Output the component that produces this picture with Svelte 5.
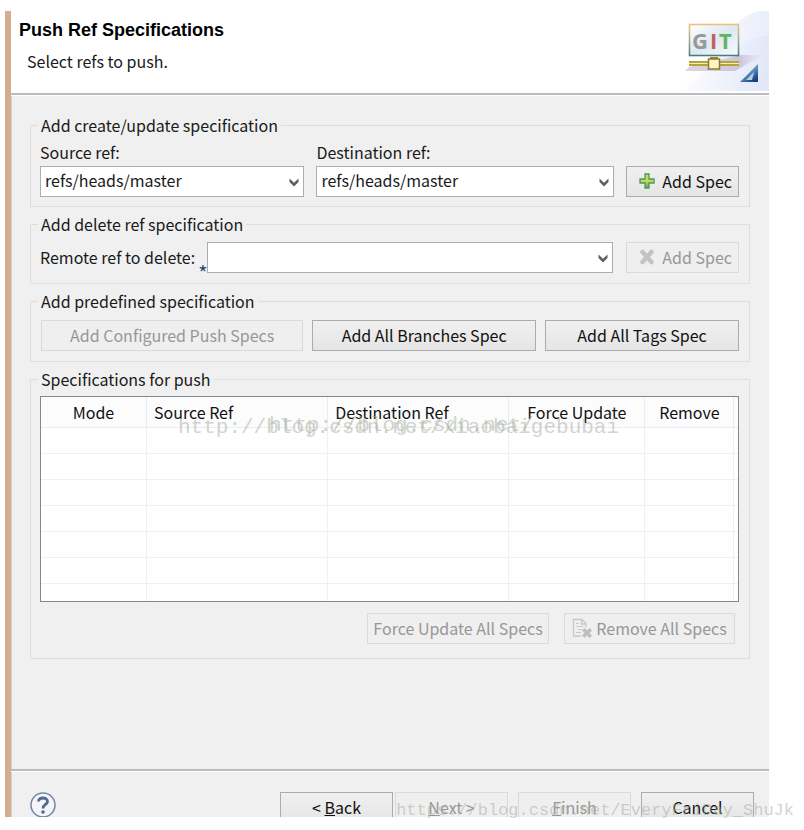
<script lang="ts">
  let sourceRef = $state('refs/heads/master');
  let destinationRef = $state('refs/heads/master');
  let deleteRef = $state('');

  const columns = [
    { label: 'Mode', cls: 'mode' },
    { label: 'Source Ref', cls: 'source' },
    { label: 'Destination Ref', cls: 'destination' },
    { label: 'Force Update', cls: 'force' },
    { label: 'Remove', cls: 'remove' },
    { label: '', cls: 'rest' }
  ];

  const emptyRows = [0, 1, 2, 3, 4, 5, 6];
</script>

{#snippet chevron()}
  <svg class="chevron" width="10" height="9" viewBox="0 0 10 9" aria-hidden="true">
    <path d="M0.5 0.5 5 4.8 9.5 0.5V4L5 8.4 0.5 4Z" fill="#606060" />
  </svg>
{/snippet}

<div class="page">
  <div class="dialog">
    <header>
      <div class="titles">
        <h1>Push Ref Specifications</h1>
        <p>Select refs to push.</p>
      </div>
      <svg class="banner" width="90" height="80" viewBox="0 0 90 80" role="img" aria-label="Git">
        <defs>
          <linearGradient id="sky" x1="0" y1="0.4" x2="1" y2="0.5">
            <stop offset="0" stop-color="#fff" />
            <stop offset="1" stop-color="#dfe6f8" />
          </linearGradient>
          <linearGradient id="frame" x1="0" y1="0" x2="0" y2="1">
            <stop offset="0" stop-color="#efc07c" />
            <stop offset="0.5" stop-color="#a5aa98" />
            <stop offset="1" stop-color="#4c7c80" />
          </linearGradient>
          <linearGradient id="board" x1="0" y1="0" x2="1" y2="1">
            <stop offset="0" stop-color="#fff" />
            <stop offset="0.5" stop-color="#dce9f3" />
            <stop offset="1" stop-color="#f8fbfd" />
          </linearGradient>
          <linearGradient id="corner" x1="0" y1="0" x2="0.7" y2="1">
            <stop offset="0.2" stop-color="#8fb8da" />
            <stop offset="0.6" stop-color="#5687bb" />
            <stop offset="1" stop-color="#183d80" />
          </linearGradient>
          <linearGradient id="shade" x1="0" y1="0" x2="1" y2="0">
            <stop offset="0" stop-color="#c9b8c8" stop-opacity="0.6" />
            <stop offset="0.7" stop-color="#b9aac8" stop-opacity="0.6" />
            <stop offset="1" stop-color="#c9c4e0" stop-opacity="0" />
          </linearGradient>
        </defs>
        <path d="M90 0H80C62 4 42 24 32 46C26 60 12 72 0 80H90Z" fill="url(#sky)" opacity="0.7" />
        <path d="M90 24C72 26 52 36 40 50C30 62 20 74 0 80H90Z" fill="url(#sky)" opacity="0.8" />
        <path d="M10 56 62 44H84L56 60H6Z" fill="url(#shade)" />
        <rect x="10.500" y="13.500" width="49" height="31" fill="url(#board)" stroke="url(#frame)" stroke-width="1.600" />
        <text x="13" y="38" fill="#999">G</text>
        <text x="31" y="38" fill="#ca5c5c">I</text>
        <text x="40" y="38" fill="#63b363">T</text>
        <path d="M31 46h8v3h-8z" fill="#958542" />
        <rect x="10" y="50" width="50" height="5" fill="#b2a63a" />
        <rect x="10" y="52" width="50" height="1" fill="#f4edb4" />
        <rect x="29.500" y="48" width="11" height="10" fill="#fff2c8" stroke="#8e7a2d" stroke-width="1.500" />
        <path d="M61 71 79 53V71Z" fill="url(#corner)" />
        <path d="M67 69 75 61 73 69Z" fill="#e4eef7" opacity="0.75" />
      </svg>
    </header>

    <main>
      <fieldset class="create">
        <legend>Add create/update specification</legend>
        <div class="field">
          <label for="source-ref">Source ref:</label>
          <div class="combo">
            <select id="source-ref" bind:value={sourceRef}>
              <option>refs/heads/master</option>
            </select>
            {@render chevron()}
          </div>
        </div>
        <div class="field">
          <label for="destination-ref">Destination ref:</label>
          <div class="combo">
            <select id="destination-ref" bind:value={destinationRef}>
              <option>refs/heads/master</option>
            </select>
            {@render chevron()}
          </div>
        </div>
        <button class="spec">
          <svg width="16" height="16" viewBox="0 0 16 16" aria-hidden="true">
            <defs>
              <linearGradient id="plus" x1="0" y1="0" x2="0" y2="1">
                <stop offset="0" stop-color="#c5dc68" />
                <stop offset="0.5" stop-color="#c6d85c" />
                <stop offset="1" stop-color="#5fa848" />
              </linearGradient>
            </defs>
            <path d="M6 1h4v5h5v4h-5v5H6v-5H1V6h5Z" fill="url(#plus)" stroke="#4d9861" stroke-width="1.300" />
          </svg>
          Add Spec
        </button>
      </fieldset>

      <fieldset class="delete">
        <legend>Add delete ref specification</legend>
        <label for="delete-ref">Remote ref to delete:</label>
        <span class="required">*</span>
        <div class="combo">
          <select id="delete-ref" bind:value={deleteRef}>
            <option value=""></option>
          </select>
          {@render chevron()}
        </div>
        <button class="spec" disabled>
          <svg width="16" height="16" viewBox="0 0 16 16" aria-hidden="true">
            <path d="M3.500 3 12.500 13M12.500 3 3.500 13" stroke="#c3c3c3" stroke-width="4.500" stroke-linecap="round" />
          </svg>
          Add Spec
        </button>
      </fieldset>

      <fieldset class="predefined">
        <legend>Add predefined specification</legend>
        <button class="configured" disabled>Add Configured Push Specs</button>
        <button class="branches">Add All Branches Spec</button>
        <button class="tags">Add All Tags Spec</button>
      </fieldset>

      <fieldset class="push">
        <legend>Specifications for push</legend>
        <div class="viewer">
          <table aria-label="Specifications for push">
            <thead>
              <tr>
                {#each columns as column}
                  <th class={column.cls}>{column.label}</th>
                {/each}
              </tr>
            </thead>
            <tbody>
              {#each emptyRows as row (row)}
                <tr>
                  {#each columns as column}
                    <td></td>
                  {/each}
                </tr>
              {/each}
            </tbody>
          </table>
          <span class="watermark long">http://blog.csdn.net/xiaobaigebubai</span>
          <span class="watermark short">http://blog.csdn.net/</span>
        </div>
        <div class="actions">
          <button class="force-all" disabled>Force Update All Specs</button>
          <button class="remove-all" disabled>
            <svg width="20" height="20" viewBox="0 0 20 20" aria-hidden="true">
              <path d="M9 18H1.500V1.500H10L14 5.500V9M9.500 1.500V6H14" fill="none" stroke="#c8c8c8" stroke-width="1.300" />
              <path d="M4 5.500h3M4 8.500h7M6 11.500h4M4 14.500h5" stroke="#c8c8c8" />
              <path d="M12.500 12.500 17.500 17.500M17.500 12.500 12.500 17.500" stroke="#bebebe" stroke-width="3.500" stroke-linecap="square" />
            </svg>
            Remove All Specs
          </button>
        </div>
      </fieldset>
    </main>

    <footer>
      <button class="help" aria-label="Help">
        <svg width="26" height="26" viewBox="0 0 26 26" aria-hidden="true">
          <circle cx="13" cy="13" r="12" fill="#f3f5f8" stroke="#7186a3" stroke-width="1.500" />
          <path d="M8.500 9.500C8.800 4.800 17.500 4.800 17.500 9.500C17.500 12.500 13 12.500 13 16.500" fill="none" stroke="#506a91" stroke-width="2.800" />
          <circle cx="13" cy="20" r="1.800" fill="#506a91" />
        </svg>
      </button>
      <div class="wizard">
        <div class="steps">
          <button>&lt; <u>B</u>ack</button>
          <button disabled><u>N</u>ext &gt;</button>
        </div>
        <button disabled><u>F</u>inish</button>
        <button>Cancel</button>
      </div>
    </footer>
  </div>
  <span class="watermark corner">https://blog.csdn.net/EveryFriDay_ShuJk</span>
</div>

<style>
  :global(body) {
    background: #fff;
  }

  .page {
    position: relative;
    display: flex;
    box-sizing: border-box;
    min-height: 100vh;
    padding: 11px 35px 13px 5px;
    overflow: hidden;
    font-family: 'Noto Sans CJK SC', 'Noto Sans', sans-serif;
    font-size: 16px;
    line-height: 22px;
    color: #1a1a1a;
  }

  .dialog {
    flex: 1;
    min-width: 0;
    display: flex;
    flex-direction: column;
    background: #f0f0f0;
    border-left: 6px solid #d3ae92;
    box-shadow: inset 1px 0 #dcd0c8;
  }

  header {
    display: flex;
    justify-content: space-between;
    height: 82px;
    background: #fff;
    border-bottom: 2px solid #bcbcbc;
  }

  .titles {
    padding: 8px 8px 0;
  }

  h1 {
    margin: 0;
    font-family: 'Liberation Sans', Arial, sans-serif;
    font-size: 18px;
    line-height: 22px;
    font-weight: bold;
    color: #000;
  }

  p {
    margin: 9px 0 0 8px;
  }

  .banner text {
    font-family: 'Open Sans', sans-serif;
    font-size: 22px;
    font-weight: bold;
  }

  main {
    flex: 1;
    display: flex;
    flex-direction: column;
    gap: 6px;
    padding: 18px 19px 0;
    border-top: 1px solid #fff;
  }

  fieldset {
    display: flex;
    min-width: 0;
    margin: 0;
    padding: 6px 10px 10px 9px;
    border: 1px solid #dedede;
  }

  legend {
    margin-left: -2px;
    padding: 0 3px;
  }

  .create {
    align-items: flex-end;
    gap: 12px;
    padding-top: 5px;
    padding-bottom: 9px;
  }

  .field {
    flex: 264;
    min-width: 0;
  }

  .field + .field {
    flex-grow: 297;
  }

  .field label {
    display: block;
    margin-bottom: 3px;
  }

  .combo {
    position: relative;
  }

  select {
    display: block;
    box-sizing: border-box;
    width: 100%;
    height: 31px;
    padding: 0 24px 4px 4px;
    appearance: none;
    background: #fff;
    border: 1px solid #abadb3;
    border-radius: 0;
    font: inherit;
    color: inherit;
  }

  .chevron {
    position: absolute;
    top: 12px;
    right: 5px;
    pointer-events: none;
  }

  .delete {
    align-items: center;
    padding-top: 7px;
  }

  .delete label {
    padding-bottom: 2px;
  }

  .delete .combo {
    flex: 1;
    margin-right: 13px;
  }

  .required {
    align-self: flex-end;
    width: 9px;
    margin-left: 3px;
    font-size: 20px;
    line-height: 0;
    color: #1f4e79;
  }

  button {
    display: flex;
    align-items: center;
    justify-content: center;
    box-sizing: border-box;
    height: 31px;
    padding: 0 0 2px;
    background: linear-gradient(#f0f0f0, #e5e5e5);
    border: 1px solid #acacac;
    border-radius: 0;
    font: inherit;
    color: #111;
    white-space: nowrap;
  }

  button:disabled {
    background: #efefef;
    border-color: #dadada;
    color: #979797;
  }

  .spec {
    width: 113px;
    justify-content: flex-end;
    gap: 7px;
    padding-right: 6px;
    flex-shrink: 0;
  }

  .predefined {
    gap: 9px;
    padding-top: 8px;
    padding-left: 10px;
  }

  .predefined legend {
    margin-left: -3px;
  }

  .configured {
    flex: 263;
  }

  .branches {
    flex: 224;
  }

  .tags {
    flex: 194;
  }

  .push {
    flex-direction: column;
    padding-bottom: 14px;
  }

  .viewer {
    position: relative;
    height: 204px;
    overflow: hidden;
    background: #fff;
    border: 1px solid #828790;
  }

  table {
    width: 100%;
    table-layout: fixed;
    border-collapse: separate;
    border-spacing: 0;
  }

  th {
    box-sizing: border-box;
    height: 31px;
    padding: 0 7px;
    background: #fcfcfc;
    border-right: 1px solid #e3eff8;
    border-bottom: 1px solid #e3eff8;
    font-weight: normal;
    color: #111;
  }

  td {
    box-sizing: border-box;
    height: 26px;
    padding: 0;
    border-right: 1px solid #f0f0f0;
    border-bottom: 1px solid #f0f0f0;
  }

  th:last-child,
  td:last-child {
    border-right: none;
  }

  .mode {
    width: 15.2%;
  }

  .source {
    width: 26%;
    text-align: left;
  }

  .destination {
    width: 26%;
    text-align: left;
  }

  .force {
    width: 19.5%;
  }

  .remove {
    width: 12.8%;
  }

  .rest {
    padding: 0;
  }

  .actions {
    display: flex;
    justify-content: flex-end;
    gap: 15px;
    margin: 11px 4px 0 0;
  }

  .force-all {
    width: 182px;
  }

  .remove-all {
    width: 171px;
    gap: 4px;
  }

  footer {
    display: flex;
    justify-content: space-between;
    box-sizing: border-box;
    height: 48px;
    padding: 21px 15px 0 19px;
    overflow: hidden;
    border-top: 2px solid #bcbcbc;
    box-shadow: inset 0 1px #fff;
  }

  .help {
    width: 26px;
    height: 26px;
    padding: 0;
    background: none;
    border: none;
  }

  .wizard {
    display: flex;
    gap: 10px;
  }

  .wizard button {
    width: 113px;
    white-space: pre;
  }

  .steps {
    display: flex;
    gap: 2px;
  }

  .watermark {
    position: absolute;
    font-family: 'Liberation Mono', monospace;
    white-space: nowrap;
    color: rgba(165, 170, 155, 0.5);
    pointer-events: none;
  }

  .long {
    top: 20px;
    left: 137px;
    font-size: 21px;
  }

  .short {
    top: 18px;
    left: 228px;
    font-size: 21px;
  }

  .corner {
    right: 10px;
    bottom: 8px;
    font-size: 17px;
  }
</style>
